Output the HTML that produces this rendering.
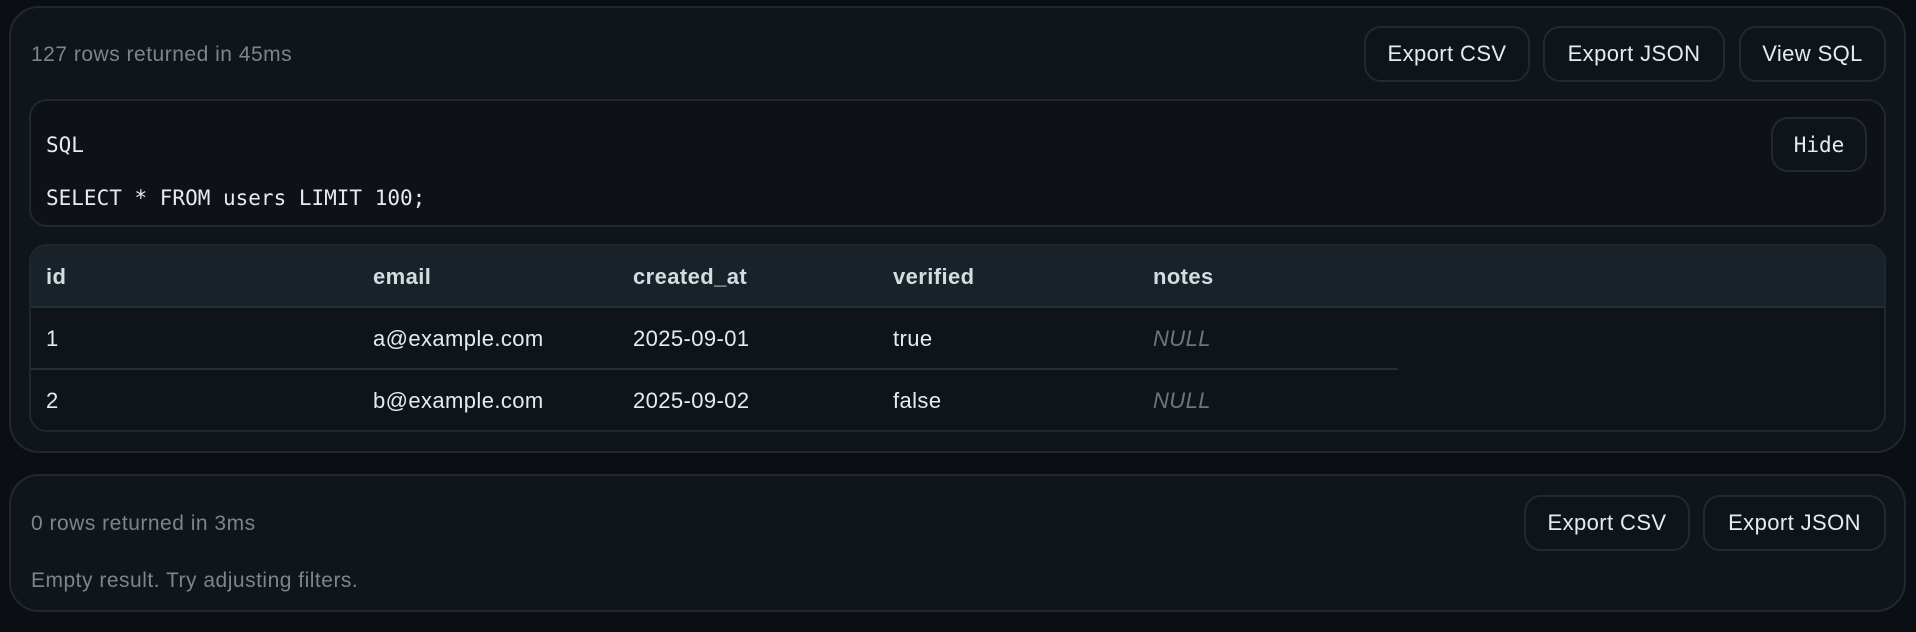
<!DOCTYPE html>
<html><head><style>
*{box-sizing:border-box;margin:0;padding:0}
body{width:1916px;height:632px;background:#0b0f13;font-family:"Liberation Sans",sans-serif;position:relative;overflow:hidden}
.card{position:absolute;left:9px;width:1897px;background:#101519;border:2px solid #1e292f;border-radius:30px}
.status{position:absolute;left:20px;color:#7b858b;font-size:21px;letter-spacing:0.5px;line-height:24px}
.btn{position:absolute;height:56px;border:2px solid #1f2b31;border-radius:17px;color:#e4ecef;font-size:22px;letter-spacing:0.4px;display:flex;align-items:center;justify-content:center;background:#0f1418}
.sql{position:absolute;left:29px;top:99px;width:1857px;height:128px;border:2px solid #1e292f;border-radius:18px;background:#0e1216}
.mono{font-family:"DejaVu Sans Mono","Liberation Mono",monospace;color:#e4ecef;font-size:21px;position:absolute;left:15px}
.tbl{position:absolute;left:29px;top:244px;width:1857px;height:188px;border:2px solid #1e292f;border-radius:18px;overflow:hidden;background:#0f1418}
.hdr{position:absolute;left:0;top:0;width:100%;height:62px;background:#182228;border-bottom:2px solid #223038}
.row{position:absolute;left:0;width:1367px;height:62px;border-bottom:2px solid #223038}
.c{position:absolute;font-size:22px;letter-spacing:0.4px;color:#e4ecef;line-height:24px}
.h{font-weight:bold;color:#d3dce1}
.n{font-style:italic;color:#6c767c}
</style></head><body>
<div class="card" style="top:6px;height:447px">
 <div class="status" style="top:35px">127 rows returned in 45ms</div>
</div>
<div class="btn" style="left:1364px;top:26px;width:166px">Export CSV</div>
<div class="btn" style="left:1543px;top:26px;width:182px">Export JSON</div>
<div class="btn" style="left:1739px;top:26px;width:147px">View SQL</div>
<div class="sql">
 <div class="mono" style="top:32px">SQL</div>
 <div class="mono" style="top:85px">SELECT * FROM users LIMIT 100;</div>
</div>
<div class="btn" style="left:1771px;top:117px;width:96px;height:55px;font-family:'DejaVu Sans Mono','Liberation Mono',monospace;font-size:21px;letter-spacing:0">Hide</div>
<div class="tbl">
 <div class="hdr">
  <div class="c h" style="left:15px;top:19px">id</div>
  <div class="c h" style="left:342px;top:19px">email</div>
  <div class="c h" style="left:602px;top:19px">created_at</div>
  <div class="c h" style="left:862px;top:19px">verified</div>
  <div class="c h" style="left:1122px;top:19px">notes</div>
 </div>
 <div class="row" style="top:62px">
  <div class="c" style="left:15px;top:19px">1</div>
  <div class="c" style="left:342px;top:19px">a@example.com</div>
  <div class="c" style="left:602px;top:19px">2025-09-01</div>
  <div class="c" style="left:862px;top:19px">true</div>
  <div class="c n" style="left:1122px;top:19px">NULL</div>
 </div>
 <div class="row" style="top:124px">
  <div class="c" style="left:15px;top:19px">2</div>
  <div class="c" style="left:342px;top:19px">b@example.com</div>
  <div class="c" style="left:602px;top:19px">2025-09-02</div>
  <div class="c" style="left:862px;top:19px">false</div>
  <div class="c n" style="left:1122px;top:19px">NULL</div>
 </div>
</div>
<div class="card" style="top:474px;height:138px">
 <div class="status" style="top:36px">0 rows returned in 3ms</div>
 <div class="status" style="top:93px">Empty result. Try adjusting filters.</div>
</div>
<div class="btn" style="left:1524px;top:495px;width:166px">Export CSV</div>
<div class="btn" style="left:1703px;top:495px;width:183px">Export JSON</div>
</body></html>
